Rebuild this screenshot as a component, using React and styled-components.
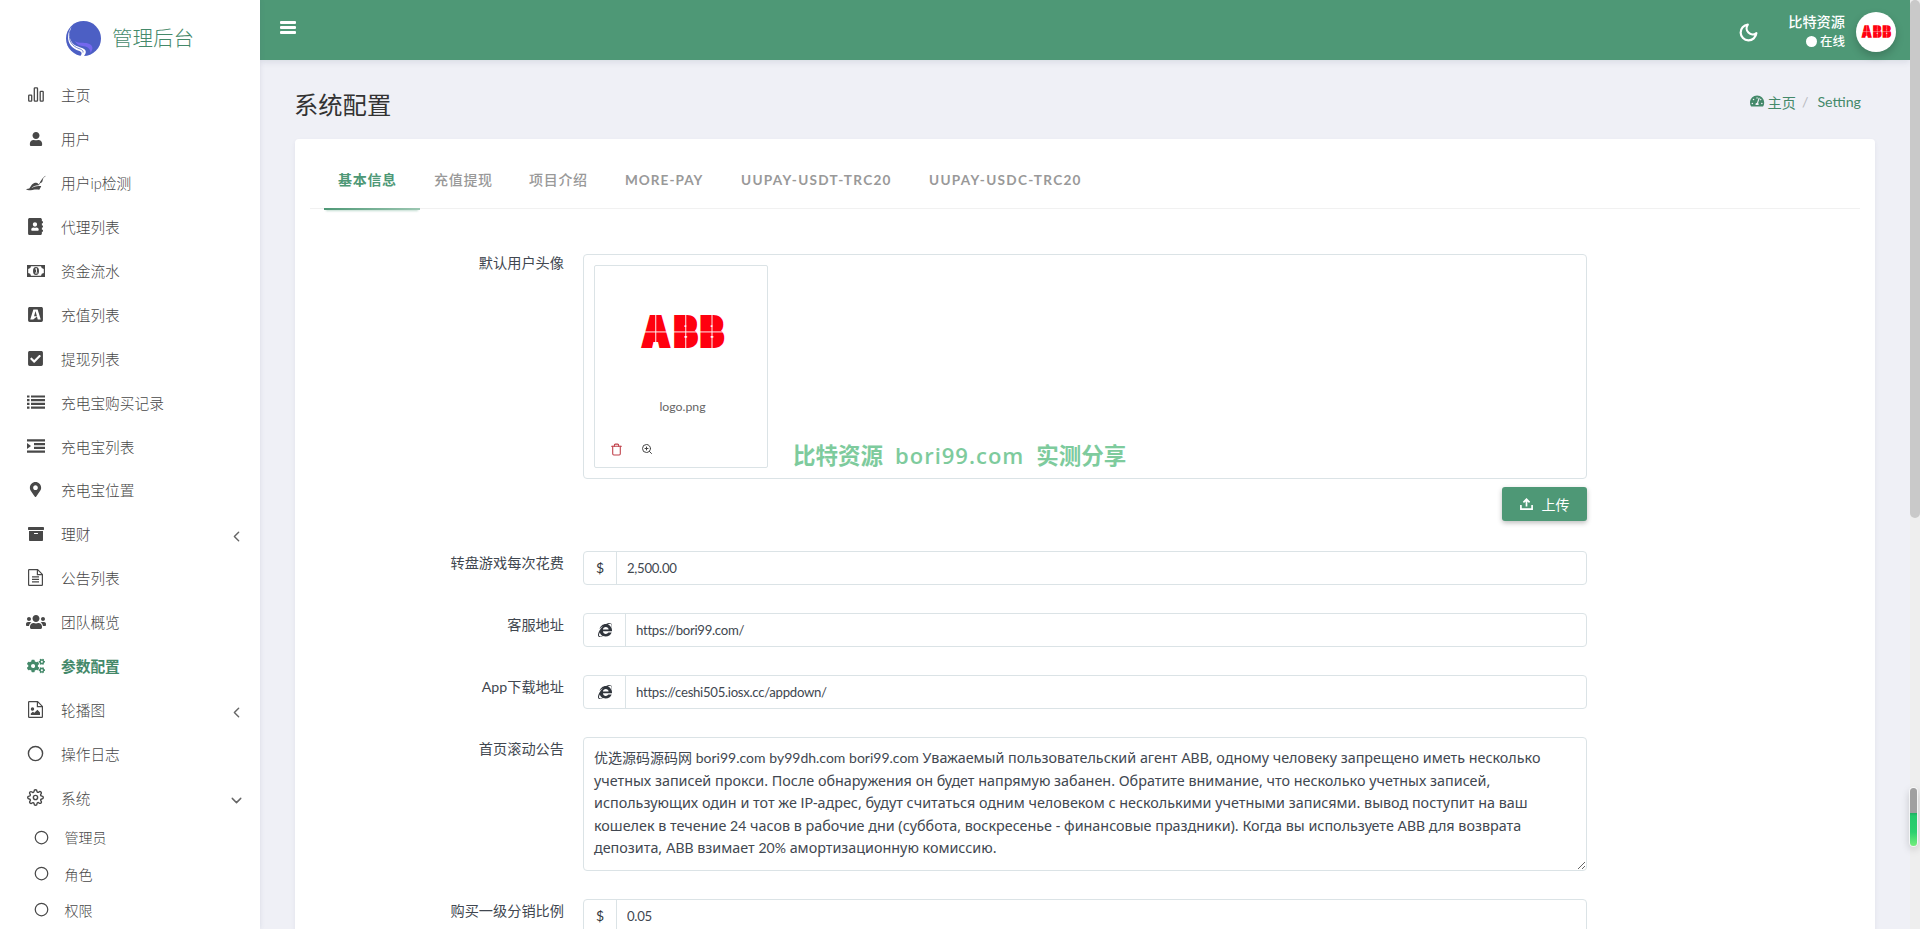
import styled, { createGlobalStyle, css } from "styled-components";
import {
  FaUser,
  FaPiedPiperHat,
  FaAddressBook,
  FaBuysellads,
  FaCheckSquare,
  FaMapMarkerAlt,
  FaArchive,
  FaUsers,
  FaCogs,
  FaInternetExplorer,
  FaTachometerAlt,
} from "react-icons/fa";
import {
  FiCircle,
  FiSettings,
  FiChevronLeft,
  FiChevronDown,
  FiTrash,
  FiZoomIn,
  FiMoon,
} from "react-icons/fi";

const GlobalStyle = createGlobalStyle`
  * {
    box-sizing: border-box;
  }

  body {
    margin: 0;
    overflow: hidden;
    background: #eff0f6;
    color: #414750;
    font-family: Lato, "Noto Sans CJK SC", sans-serif;
    font-size: 14px;
  }
`;

const green = "#4e9876";

const Page = styled.div`
  display: flex;
  height: 929px;
  overflow: hidden;
`;

const Sidebar = styled.aside`
  flex: none;
  width: 260px;
  background: #fff;
  box-shadow: 0 0 5px rgba(60, 70, 110, 0.12);
  z-index: 1;
`;

const Brand = styled.div`
  display: flex;
  align-items: center;
  height: 73px;
  padding-left: 66px;
  gap: 11px;
  color: #44896a;
  font-size: 20.5px;
  font-weight: 300;

  svg {
    margin-top: 4px;
  }
`;

const Menu = styled.nav`
  display: flex;
  flex-direction: column;
`;

const MenuItem = styled.div`
  display: flex;
  align-items: center;
  height: ${({ $sub }) => ($sub ? 36.3 : 43.9)}px;
  padding: 0 15px 0 ${({ $sub }) => ($sub ? 31 : 25.5)}px;
  color: ${({ $active }) => ($active ? "#44896a" : "#484848")};
  font-size: ${({ $sub }) => ($sub ? 14 : 14.7)}px;
  font-weight: ${({ $active }) => ($active ? 700 : 300)};
  white-space: nowrap;
`;

const MenuIcon = styled.span`
  display: flex;
  justify-content: center;
  width: 20px;
  margin-right: ${({ $sub }) => ($sub ? 13.5 : 15.5)}px;
  font-size: ${({ $sub }) => ($sub ? 15 : 17)}px;
`;

const Label = styled.span`
  flex: 1;
`;

const Arrow = styled.span`
  display: flex;
  margin: 6px 0 0;
  color: #666;
  font-size: 17px;
`;

const Main = styled.main`
  flex: 1;
  min-width: 0;
`;

const Header = styled.header`
  display: flex;
  align-items: center;
  height: 60px;
  padding: 0 14px 0 20px;
  background: ${green};
  color: #fff;
  box-shadow: 0 2px 6px rgba(60, 70, 110, 0.12);
`;

const Burger = styled.div`
  display: flex;
  flex-direction: column;
  gap: 2px;
  width: 16px;
  margin: 0 auto 5px 0;

  i {
    height: 3px;
    border-radius: 1px;
    background: #fff;
  }
`;

const Moon = styled.div`
  display: flex;
  margin: 4px 29px 0 0;
  font-size: 21px;

  svg {
    stroke-width: 2.5;
  }
`;

const UserInfo = styled.div`
  display: flex;
  flex-direction: column;
  align-items: flex-end;
  margin: 3px 11px 0 0;
  font-size: 14.2px;
  font-weight: 500;
  line-height: 20px;
`;

const Status = styled.span`
  display: flex;
  align-items: center;
  gap: 3px;
  font-size: 12.5px;

  &::before {
    content: "";
    width: 11px;
    height: 11px;
    border-radius: 50%;
    background: #fff;
  }
`;

const Avatar = styled.div`
  display: flex;
  align-items: center;
  justify-content: center;
  width: 40px;
  height: 40px;
  margin-top: 4px;
  border-radius: 50%;
  background: #fff;
  box-shadow: 0 4px 8px rgba(0, 0, 0, 0.2);
`;

const ContentHeader = styled.div`
  display: flex;
  align-items: center;
  justify-content: space-between;
  height: 79px;
  padding: 8px 49px 0 34px;
`;

const Heading = styled.h1`
  margin: 0;
  color: #333;
  font-size: 24.3px;
  font-weight: 400;
`;

const Breadcrumb = styled.div`
  display: flex;
  align-items: center;
  margin-top: -4px;
  color: #44896a;
  font-size: 14.2px;

  svg {
    margin-right: 3px;
  }

  i {
    margin: 0 9px 0 6px;
    color: #b8bac0;
    font-style: normal;
  }
`;

const Card = styled.section`
  height: 900px;
  margin: 0 35px;
  padding: 15px;
  border-radius: 4px;
  background: #fff;
  box-shadow: 0 2px 4px rgba(60, 70, 110, 0.08);
`;

const Tabs = styled.div`
  display: flex;
  height: 55px;
  padding-left: 14px;
  border-bottom: 1px solid #f1f1f1;
`;

const Tab = styled.div`
  width: ${({ $width }) => $width}px;
  height: 56px;
  padding: 16px 0 0 14px;
  color: ${({ $active }) => ($active ? green : "#999")};
  font-size: 14px;
  font-weight: ${({ $active }) => ($active ? 700 : 500)};
  letter-spacing: 0.7px;
  line-height: 20px;
  white-space: nowrap;

  ${({ $latin }) =>
    $latin &&
    css`
      font-size: 13.6px;
      font-weight: 700;
      letter-spacing: ${$latin}px;
    `}

  ${({ $active }) =>
    $active &&
    css`
      background: linear-gradient(90deg, ${green}, #9cc7b2) bottom / 100% 2px no-repeat;
      box-shadow: 0 3px 2px -2px rgba(78, 152, 118, 0.35);
    `}
`;

const Form = styled.form`
  display: grid;
  gap: 28px;
  padding-top: 45px;
`;

const Row = styled.div`
  display: grid;
  grid-template-columns: 254px 1004px;
  column-gap: 19px;
`;

const RowLabel = styled.label`
  padding-top: ${({ $offset }) => $offset || 0}px;
  color: #414750;
  font-size: 14.2px;
  line-height: 18px;
  text-align: right;
`;

const Uploader = styled.div`
  display: flex;
  align-items: flex-end;
  gap: 25px;
  height: 225px;
  padding: 10px;
  border: 1px solid #dbe3e6;
  border-radius: 4px;
`;

const FileCard = styled.figure`
  display: flex;
  flex-direction: column;
  align-items: center;
  width: 174px;
  height: 203px;
  margin: 0;
  padding: 39px 14px 0 15px;
  border: 1px solid #dbe3e6;
  border-radius: 2px;
`;

const FileName = styled.figcaption`
  margin: 36px 0 0 2px;
  color: #666;
  font-size: 12.3px;
  line-height: 16px;
`;

const FileActions = styled.div`
  display: flex;
  gap: 18px;
  align-self: flex-start;
  margin-top: 28px;
  font-size: 13px;
  color: #444;

  svg:first-child {
    color: #c0404a;
  }
`;

const Watermark = styled.div`
  display: flex;
  align-items: baseline;
  gap: 12px;
  color: #7ecb9d;
  font-size: 22.5px;
  font-weight: 700;
  line-height: 24px;
  white-space: nowrap;
`;

const Domain = styled.span`
  font-family: "Open Sans", sans-serif;
  font-size: 22px;
  font-weight: 600;
  letter-spacing: 1px;
`;

const UploadButton = styled.button`
  display: flex;
  align-items: center;
  justify-content: center;
  justify-self: end;
  gap: 9px;
  grid-column: 2;
  width: 85px;
  height: 34px;
  margin: 8px 0 2px;
  padding: 0;
  border: 0;
  border-radius: 3px;
  background: ${green};
  color: #fff;
  box-shadow: 0 2px 5px rgba(0, 0, 0, 0.26);
  font: 400 14px "Noto Sans CJK SC", sans-serif;
`;

const InputGroup = styled.div`
  display: flex;
  height: 34px;
  border: 1px solid #dbe3e6;
  border-radius: 4px;
`;

const Addon = styled.span`
  display: flex;
  align-items: center;
  justify-content: center;
  width: ${({ $wide }) => ($wide ? 42 : 33)}px;
  padding-bottom: ${({ $wide }) => ($wide ? 0 : 2)}px;
  border-right: 1px solid #dbe3e6;
  color: #30353c;
  font-size: 14px;
`;

const Input = styled.input`
  flex: 1;
  padding: 0 10px 1px;
  border: 0;
  outline: 0;
  background: none;
  color: #414750;
  font: 13.2px Lato, sans-serif;
  letter-spacing: -0.3px;
`;

const TextArea = styled.div`
  height: 134px;
  padding: 9px 10px;
  border: 1px solid #dbe3e6;
  border-radius: 4px;
  color: #414750;
  font: 14.35px/22.5px "Noto Sans", sans-serif;
  overflow: hidden;
  resize: vertical;
  white-space: pre;
`;

const Latin = styled.span`
  font-family: Lato, "Noto Sans CJK SC", sans-serif;
  font-size: 14px;
  line-height: 1;
`;

const Scrollbar = styled.div`
  flex: none;
  width: 10px;
  background: #eee;
`;

const Thumb = styled.div`
  height: 518px;
  border-radius: 5px;
  background: #c9c9c9;
`;

// small meter that floats over the scroll track
const Meter = styled.div`
  position: absolute;
  top: 788px;
  left: 1910px;
  width: 7px;
  height: 58px;
  border-radius: 4px;
  background: linear-gradient(#a0a0a0 25px, #1fae62 25px, #25c96c 28px, #2bd06e 44px, #74ee7c);
  box-shadow: 0 0 0 1px rgba(255, 255, 255, 0.7), 0 3px 8px rgba(0, 0, 0, 0.22);
`;

const BrandLogo = () => (
  <svg width="35" height="35" viewBox="0 0 35 35">
    <circle cx="17.5" cy="17.5" r="17.5" fill="#4c5fc4" />
    <path d="M9 20c4 3 9 1 13 2.500 6 2 5 6 2.500 9.500 0-5-4-6.500-8-7-4-.5-6-2-7.500-5z" fill="#7468ee" />
    <path
      d="M5.500 6C1.500 14 4 22 10.500 25c4 1.800 9.500 2.200 9.300 6 0 1.600-.8 2.600-1.800 4h-3.500c1.600-2 1.700-4-1-5C5 27.500 2 22 2 15.500 2 12 3.500 8.500 5.500 6z"
      fill="#fff"
    />
    <path d="M4 9.500c-2.200 8 .8 14 6.500 17 3.500 1.800 7 2 6.500 5" fill="none" stroke="#4c5fc4" strokeWidth="0.8" />
  </svg>
);

const ChartIcon = () => (
  <svg width="16" height="15" viewBox="0 0 16 15" fill="none" stroke="currentColor" strokeWidth="1.3">
    <rect x="0.7" y="8.2" width="3" height="6" rx="0.6" />
    <rect x="6.3" y="0.8" width="3.2" height="13.4" rx="0.6" />
    <rect x="12.2" y="4.4" width="3" height="9.8" rx="0.6" />
  </svg>
);

const MoneyIcon = () => (
  <svg width="18" height="12" viewBox="0 0 18 12">
    <path
      d="M0 0h18v12H0zM4 1.2A3 3 0 0 1 1.2 4v4A3 3 0 0 1 4 10.8h10A3 3 0 0 1 16.8 8V4A3 3 0 0 1 14 1.2z"
      fill="currentColor"
      fillRule="evenodd"
    />
    <ellipse cx="9" cy="6" rx="3" ry="4" fill="currentColor" />
    <path d="M8 4.4l1-.9h.5v4M8 8h2.5" stroke="#fff" strokeWidth="0.9" fill="none" />
  </svg>
);

const ListIcon = () => (
  <svg width="18" height="14" viewBox="0 0 18 14" fill="none" stroke="currentColor" strokeWidth="2.2">
    <path d="M0 1.500h2.500M4 1.500h14M0 5.200h2.500M4 5.200h14M0 8.900h2.500M4 8.900h14M0 12.600h2.500M4 12.600h14" />
  </svg>
);

const IndentIcon = () => (
  <svg width="18" height="14" viewBox="0 0 18 14" fill="none" stroke="currentColor" strokeWidth="2.2">
    <path d="M0 1.300h18M7 5.100h11M7 8.900h11M0 12.700h18" />
    <path d="M0 4v6l4-3z" fill="currentColor" stroke="none" />
  </svg>
);

const FileIcon = ({ image }) => (
  <svg width="15" height="17" viewBox="0 0 15 17" fill="none" stroke="currentColor" strokeWidth="1.2">
    <path d="M.6 1.2q0-.6.6-.6h8.4l4.8 4.8v10.4q0 .6-.6.6H1.2q-.6 0-.6-.6zM9.4.8v4.8h4.8" />
    {image ? (
      <>
        <circle cx="4.5" cy="8" r="1.1" fill="currentColor" />
        <path d="M2.8 14v-1.6l2-1.6 1.6 1 3-3 2.6 2.6V14z" fill="currentColor" stroke="none" />
      </>
    ) : (
      <path d="M4 7.8h7M4 10.3h7M4 12.8h7" />
    )}
  </svg>
);

const UploadIcon = () => (
  <svg width="13" height="12" viewBox="0 0 13 12" fill="none" stroke="currentColor" strokeWidth="1.7">
    <path d="M.9 7v4.1h11.2V7M6.5 8.5V1.6M3.4 4.3l3.1-3.1 3.1 3.1" />
  </svg>
);

const AbbLogo = ({ width }) => (
  <svg width={width} height={width * 0.64} viewBox="-3 -10 96 61">
    <g
      fill="#ff000f"
      stroke="#ff000f"
      strokeWidth="4.5"
      fontFamily="Inter, sans-serif"
      fontSize="42"
      fontWeight="900"
    >
      <text x="3" y="34" textLength="28" lengthAdjust="spacingAndGlyphs">A</text>
      <text x="37" y="34" textLength="24" lengthAdjust="spacingAndGlyphs">B</text>
      <text x="65" y="34" textLength="24" lengthAdjust="spacingAndGlyphs">B</text>
    </g>
    <path d="M-3 18.500h96M17 0v37M49 0v37M77 0v37" stroke="#fff" strokeWidth="1" />
  </svg>
);

const menu = [
  { label: "主页", icon: <ChartIcon /> },
  { label: "用户", icon: <FaUser size={14} /> },
  { label: "用户ip检测", icon: <FaPiedPiperHat size={22} /> },
  { label: "代理列表", icon: <FaAddressBook /> },
  { label: "资金流水", icon: <MoneyIcon /> },
  { label: "充值列表", icon: <FaBuysellads /> },
  { label: "提现列表", icon: <FaCheckSquare /> },
  { label: "充电宝购买记录", icon: <ListIcon /> },
  { label: "充电宝列表", icon: <IndentIcon /> },
  { label: "充电宝位置", icon: <FaMapMarkerAlt size={15} /> },
  { label: "理财", icon: <FaArchive size={16} />, arrow: <FiChevronLeft /> },
  { label: "公告列表", icon: <FileIcon /> },
  { label: "团队概览", icon: <FaUsers size={20} /> },
  { label: "参数配置", icon: <FaCogs size={18} />, active: true },
  { label: "轮播图", icon: <FileIcon image />, arrow: <FiChevronLeft /> },
  { label: "操作日志", icon: <FiCircle /> },
  { label: "系统", icon: <FiSettings />, arrow: <FiChevronDown /> },
  { label: "管理员", icon: <FiCircle />, sub: true },
  { label: "角色", icon: <FiCircle />, sub: true },
  { label: "权限", icon: <FiCircle />, sub: true },
];

const tabs = [
  { label: "基本信息", width: 96, active: true },
  { label: "充值提现", width: 95 },
  { label: "项目介绍", width: 96 },
  { label: "MORE-PAY", width: 116, latin: 1 },
  { label: "UUPAY-USDT-TRC20", width: 188, latin: 1.3 },
  { label: "UUPAY-USDC-TRC20", width: 188, latin: 1.3 },
];

const notice = `优选源码源码网 bori99.com by99dh.com bori99.com Уважаемый пользовательский агент ABB, одному человеку запрещено иметь несколько
учетных записей прокси. После обнаружения он будет напрямую забанен. Обратите внимание, что несколько учетных записей,
использующих один и тот же IP-адрес, будут считаться одним человеком с несколькими учетными записями. вывод поступит на ваш
кошелек в течение 24 часов в рабочие дни (суббота, воскресенье - финансовые праздники). Когда вы используете ABB для возврата
депозита, ABB взимает 20% амортизационную комиссию.`;

// latin words, numbers and chinese are set in the lighter face
const noticeParts = notice.split(/([a-z0-9.%\u4e00-\u9fff]*[a-z0-9%\u4e00-\u9fff]+)/i);

const Field = ({ label, value, url }) => (
  <Row>
    <RowLabel $offset={3}>{label}</RowLabel>
    <InputGroup>
      <Addon $wide={url}>{url ? <FaInternetExplorer /> : "$"}</Addon>
      <Input defaultValue={value} />
    </InputGroup>
  </Row>
);

const App = () => {
  return (
    <>
      <GlobalStyle />
      <Page>
        <Sidebar>
          <Brand>
            <BrandLogo />
            管理后台
          </Brand>
          <Menu>
            {menu.map(({ label, icon, arrow, active, sub }) => (
              <MenuItem key={label} $active={active} $sub={sub}>
                <MenuIcon $sub={sub}>{icon}</MenuIcon>
                <Label>{label}</Label>
                {arrow && <Arrow>{arrow}</Arrow>}
              </MenuItem>
            ))}
          </Menu>
        </Sidebar>

        <Main>
          <Header>
            <Burger>
              <i />
              <i />
              <i />
            </Burger>
            <Moon>
              <FiMoon />
            </Moon>
            <UserInfo>
              比特资源
              <Status>在线</Status>
            </UserInfo>
            <Avatar>
              <AbbLogo width={32} />
            </Avatar>
          </Header>

          <ContentHeader>
            <Heading>系统配置</Heading>
            <Breadcrumb>
              <FaTachometerAlt />
              主页<i>/</i>Setting
            </Breadcrumb>
          </ContentHeader>

          <Card>
            <Tabs>
              {tabs.map(({ label, width, active, latin }) => (
                <Tab key={label} $width={width} $active={active} $latin={latin}>
                  {label}
                </Tab>
              ))}
            </Tabs>

            <Form>
              <Row>
                <RowLabel>默认用户头像</RowLabel>
                <Uploader>
                  <FileCard>
                    <AbbLogo width={90} />
                    <FileName>logo.png</FileName>
                    <FileActions>
                      <FiTrash />
                      <FiZoomIn size={12} />
                    </FileActions>
                  </FileCard>
                  <Watermark>
                    <span>比特资源</span>
                    <Domain>bori99.com</Domain>
                    <span>实测分享</span>
                  </Watermark>
                </Uploader>
                <UploadButton type="button">
                  <UploadIcon />
                  上传
                </UploadButton>
              </Row>
              <Field label="转盘游戏每次花费" value="2,500.00" />
              <Field label="客服地址" value="https://bori99.com/" url />
              <Field label="App下载地址" value="https://ceshi505.iosx.cc/appdown/" url />
              <Row>
                <RowLabel $offset={3}>首页滚动公告</RowLabel>
                <TextArea>
                  {noticeParts.map((part, i) => (i % 2 ? <Latin key={i}>{part}</Latin> : part))}
                </TextArea>
              </Row>
              <Field label="购买一级分销比例" value="0.05" />
            </Form>
          </Card>
        </Main>

        <Scrollbar>
          <Thumb />
        </Scrollbar>
        <Meter />
      </Page>
    </>
  );
};

export default App;
